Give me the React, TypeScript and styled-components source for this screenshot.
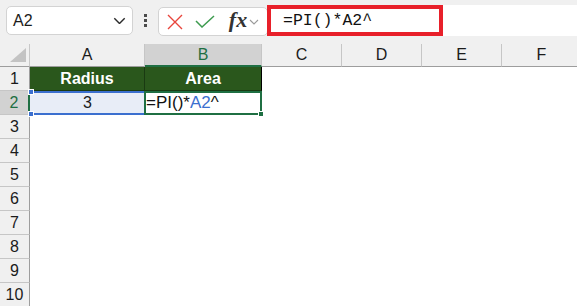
import * as React from 'react';
import styled, { createGlobalStyle } from 'styled-components';

const GlobalStyle = createGlobalStyle`
    html, body {
        margin: 0;
        padding: 0;
        background: #ffffff;
        overflow: hidden;
    }
    body {
        font-family: 'Liberation Sans', Arial, sans-serif;
    }
`;

const COLUMNS = ['A', 'B', 'C', 'D', 'E', 'F'];
const ROWS = [1, 2, 3, 4, 5, 6, 7, 8, 9, 10];
const EXCEL_GREEN = '#1f6f43';

const Page = styled.div`
    width: 577px;
    height: 306px;
    overflow: hidden;
    display: flex;
    flex-direction: column;
    background: #ffffff;
`;

const Toolbar = styled.div`
    height: 44px;
    flex-shrink: 0;
    box-sizing: border-box;
    background: #f0f0f0;
    display: flex;
    align-items: flex-start;
    padding: 6px 0 0 6px;
`;

const NameBox = styled.div`
    width: 127px;
    height: 29px;
    box-sizing: border-box;
    background: #ffffff;
    border: 1px solid #d3d3d3;
    border-radius: 5px;
    display: flex;
    align-items: center;
    justify-content: space-between;
    padding: 0 6px 0 6px;
    font-size: 16px;
    color: #1b1b1b;
`;

const Dots = styled.div`
    width: 25px;
    height: 29px;
    display: flex;
    flex-direction: column;
    align-items: center;
    justify-content: center;
    gap: 2px;
`;

const Dot = styled.span`
    width: 3px;
    height: 3px;
    background: #4a4a4a;
`;

const FxBox = styled.div`
    width: 110px;
    height: 29px;
    margin-top: 1px;
    box-sizing: border-box;
    background: #ffffff;
    border: 1px solid #d3d3d3;
    border-radius: 5px;
    display: flex;
    align-items: center;
    padding-left: 7px;
`;

const IconSlot = styled.span<{ $width: number }>`
    width: ${p => p.$width}px;
    display: flex;
    align-items: center;
    justify-content: center;
`;

const FxText = styled.span`
    font-family: 'Liberation Serif', 'DejaVu Serif', serif;
    font-style: italic;
    font-weight: bold;
    font-size: 22px;
    color: #333333;
    line-height: 1;
    margin-top: -3px;
`;

const FormulaBar = styled.div`
    flex: 1;
    height: 31px;
    margin-top: -1px;
    margin-left: -1px;
    background: #ffffff;
    display: flex;
`;

const Highlight = styled.div`
    width: 176px;
    height: 31px;
    box-sizing: border-box;
    border: 4px solid #e8202a;
    display: flex;
    align-items: center;
    padding-left: 12px;
    font-family: 'Liberation Mono', 'DejaVu Sans Mono', monospace;
    font-size: 16.5px;
    color: #111111;
`;

const Sheet = styled.div`
    display: grid;
    grid-template-columns: 30px 115px 117px 80px 80px 80px 80px;
    grid-template-rows: 23px;
    grid-auto-rows: 24px;
    font-size: 16px;
`;

const Corner = styled.div`
    position: relative;
    background: #f0f0f0;
    border-right: 1px solid #c8c8c8;
    border-bottom: 1px solid #9d9d9d;
    box-sizing: border-box;
`;

const CornerTriangle = styled.div`
    position: absolute;
    right: 3px;
    bottom: 4px;
    width: 0;
    height: 0;
    border-left: 16px solid transparent;
    border-bottom: 14px solid #c3c3c3;
`;

const ColHeader = styled.div<{ $active?: boolean }>`
    box-sizing: border-box;
    display: flex;
    align-items: center;
    justify-content: center;
    background: ${p => (p.$active ? '#d2d2d2' : '#f0f0f0')};
    color: ${p => (p.$active ? EXCEL_GREEN : '#1b1b1b')};
    border-right: 1px solid #c6c6c6;
    border-bottom: ${p => (p.$active ? `2px solid ${EXCEL_GREEN}` : '1px solid #9d9d9d')};
    padding-top: ${p => (p.$active ? '1px' : '0')};
`;

const RowHeader = styled.div<{ $active?: boolean }>`
    box-sizing: border-box;
    display: flex;
    align-items: center;
    justify-content: center;
    background: ${p => (p.$active ? '#d2d2d2' : '#f0f0f0')};
    color: ${p => (p.$active ? EXCEL_GREEN : '#1b1b1b')};
    border-right: ${p => (p.$active ? `2px solid ${EXCEL_GREEN}` : '1px solid #9d9d9d')};
    border-bottom: 1px solid #c6c6c6;
`;

const Cell = styled.div`
    box-sizing: border-box;
    background: #ffffff;
`;

const TitleCell = styled.div<{ $last?: boolean }>`
    box-sizing: border-box;
    display: flex;
    align-items: center;
    justify-content: center;
    background: #2a571c;
    color: #ffffff;
    font-weight: bold;
    border-right: 1px solid ${p => (p.$last ? '#000000' : '#1a3a12')};
    border-bottom: 1px solid #1a3a12;
`;

const ReferencedCell = styled.div`
    position: relative;
    box-sizing: border-box;
    display: flex;
    align-items: center;
    justify-content: center;
    background: #e8edf7;
    border-top: 2px solid #3b6fcf;
    border-bottom: 2px solid #3b6fcf;
    color: #1b1b1b;
`;

const Handle = styled.span<{ $top?: boolean; $right?: boolean; $color: string }>`
    position: absolute;
    width: 4px;
    height: 4px;
    background: ${p => p.$color};
    border: 1px solid #ffffff;
    ${p => (p.$top ? 'top: -4px;' : 'bottom: -4px;')}
    ${p => (p.$right ? 'right: -4px;' : 'left: -2px;')}
`;

const EditCell = styled.div`
    position: relative;
    box-sizing: border-box;
    display: flex;
    align-items: center;
    margin-left: -1px;
    background: #ffffff;
    border: 2px solid ${EXCEL_GREEN};
    font-size: 17px;
    color: #111111;
    z-index: 1;
`;

const RefText = styled.span`
    color: #3b6fcf;
`;

const Chevron = ({ color, size }: { color: string; size: number }) => (
    <svg width={size} height={size * 0.6} viewBox="0 0 10 6" fill="none">
        <path d="M1 1 L5 5 L9 1" stroke={color} strokeWidth="1.1" />
    </svg>
);

export default function App() {
    return (
        <Page>
            <GlobalStyle />
            <Toolbar>
                <NameBox>
                    <span>A2</span>
                    <Chevron color="#2b2b2b" size={13} />
                </NameBox>
                <Dots>
                    <Dot />
                    <Dot />
                    <Dot />
                </Dots>
                <FxBox>
                    <IconSlot $width={17}>
                        <svg width="16" height="16" viewBox="0 0 16 16">
                            <path d="M1 1 L15 15 M15 1 L1 15" stroke="#e8453c" strokeWidth="1.4" />
                        </svg>
                    </IconSlot>
                    <IconSlot $width={44}>
                        <svg width="20" height="13" viewBox="0 0 20 13">
                            <path d="M1 6 L7 12 L19 1" stroke="#3d9b4f" strokeWidth="1.5" fill="none" />
                        </svg>
                    </IconSlot>
                    <IconSlot $width={22}>
                        <FxText>fx</FxText>
                    </IconSlot>
                    <IconSlot $width={10}>
                        <Chevron color="#9a9a9a" size={10} />
                    </IconSlot>
                </FxBox>
                <FormulaBar>
                    <Highlight>=PI()*A2^</Highlight>
                </FormulaBar>
            </Toolbar>
            <Sheet>
                <Corner>
                    <CornerTriangle />
                </Corner>
                {COLUMNS.map(col => (
                    <ColHeader key={col} $active={col === 'B'}>
                        {col}
                    </ColHeader>
                ))}
                {ROWS.map(row => (
                    <React.Fragment key={row}>
                        <RowHeader $active={row === 2}>{row}</RowHeader>
                        {row === 1 && (
                            <>
                                <TitleCell>Radius</TitleCell>
                                <TitleCell $last>Area</TitleCell>
                            </>
                        )}
                        {row === 2 && (
                            <>
                                <ReferencedCell>
                                    3
                                    <Handle $top $color="#3b6fcf" />
                                    <Handle $color="#3b6fcf" />
                                </ReferencedCell>
                                <EditCell>
                                    =PI()*<RefText>A2</RefText>^
                                    <Handle $right $color={EXCEL_GREEN} />
                                </EditCell>
                            </>
                        )}
                        {row > 2 && (
                            <>
                                <Cell />
                                <Cell />
                            </>
                        )}
                        <Cell />
                        <Cell />
                        <Cell />
                        <Cell />
                    </React.Fragment>
                ))}
            </Sheet>
        </Page>
    );
}
